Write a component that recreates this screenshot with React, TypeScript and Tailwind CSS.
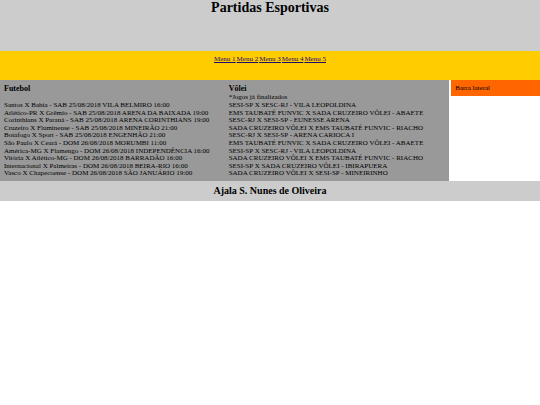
const menus = ['Menu 1', 'Menu 2', 'Menu 3', 'Menu 4', 'Menu 5'];

const futebol = [
    'Santos X Bahia - SAB 25/08/2018 VILA BELMIRO 16:00',
    'Atlético-PR X Grêmio - SAB 25/08/2018 ARENA DA BAIXADA 19:00',
    'Corinthians X Paraná - SAB 25/08/2018 ARENA CORINTHIANS 19:00',
    'Cruzeiro X Fluminense - SAB 25/08/2018 MINEIRÃO 21:00',
    'Botafogo X Sport - SAB 25/08/2018 ENGENHÃO 21:00',
    'São Paulo X Ceará - DOM 26/08/2018 MORUMBI 11:00',
    'América-MG X Flamengo - DOM 26/08/2018 INDEPENDÊNCIA 16:00',
    'Vitória X Atlético-MG - DOM 26/08/2018 BARRADÃO 16:00',
    'Internacional X Palmeiras - DOM 26/08/2018 BEIRA-RIO 16:00',
    'Vasco X Chapecoense - DOM 26/08/2018 SÃO JANUÁRIO 19:00',
];

const volei = [
    'SESI-SP X SESC-RJ - VILA LEOPOLDINA',
    'EMS TAUBATÉ FUNVIC X SADA CRUZEIRO VÔLEI - ABAETE',
    'SESC-RJ X SESI-SP - EUNESSE ARENA',
    'SADA CRUZEIRO VÔLEI X EMS TAUBATÉ FUNVIC - RIACHO',
    'SESC-RJ X SESI-SP - ARENA CARIOCA I',
    'EMS TAUBATÉ FUNVIC X SADA CRUZEIRO VÔLEI - ABAETE',
    'SESI-SP X SESC-RJ - VILA LEOPOLDINA',
    'SADA CRUZEIRO VÔLEI X EMS TAUBATÉ FUNVIC - RIACHO',
    'SESI-SP X SADA CRUZEIRO VÔLEI - IBIRAPUERA',
    'SADA CRUZEIRO VÔLEI X SESI-SP - MINEIRINHO',
];

function Jogos({ titulo, nota, jogos }: { titulo: string; nota?: string; jogos: string[] }) {
    return (
        <section className="w-1/2 px-1">
            <h2 className="text-[8px] leading-[10px] font-bold">{titulo}</h2>
            <p className="h-2 leading-[7px]">{nota}</p>
            <ul className="grid h-[76px] auto-rows-fr whitespace-nowrap">
                {jogos.map((jogo, i) => (
                    <li key={i}>{jogo}</li>
                ))}
            </ul>
        </section>
    );
}

export default function App() {
    return (
        <div className="font-['Liberation_Serif',serif] text-[7px] leading-[7px] text-black">
            <header className="h-[51px] bg-[#cccccc] text-center">
                <h1 className="text-[14px] leading-[16px] font-bold">Partidas Esportivas</h1>
            </header>

            <nav className="flex h-[29px] justify-center gap-px bg-[#ffcc00] pt-1 leading-[8px]">
                {menus.map((menu) => (
                    <a key={menu} href="#" className="h-2 text-[#1c0a6e] underline">
                        {menu}
                    </a>
                ))}
            </nav>

            <div className="flex items-start gap-[2px]">
                <main className="flex w-[83.2%] shrink-0 bg-[#999999] pt-1 pb-[3px]">
                    <Jogos titulo="Futebol" jogos={futebol} />
                    <Jogos titulo="Vôlei" nota="*Jogos já finalizados" jogos={volei} />
                </main>
                <aside className="grow bg-[#ff6600] p-1 leading-[8px]">Barra lateral</aside>
            </div>

            <footer className="bg-[#cccccc] py-1 text-center">
                <h2 className="text-[10px] leading-[12px] font-bold">Ajala S. Nunes de Oliveira</h2>
            </footer>
        </div>
    );
}
